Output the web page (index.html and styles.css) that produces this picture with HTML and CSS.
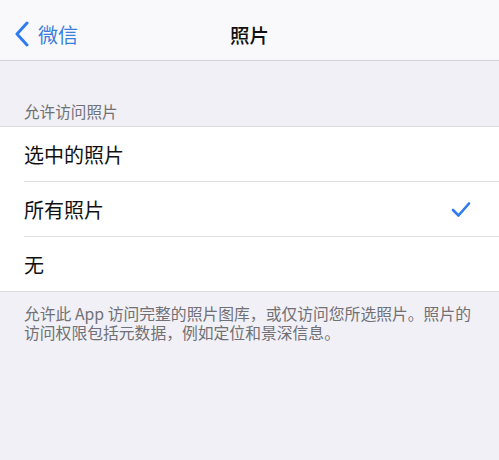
FILE: index.html
```html
<!DOCTYPE html>
<html lang="zh">
<head>
<meta charset="utf-8">
<link rel="stylesheet" href="styles.css">
</head>
<body>
<header class="nav">
  <a class="back">
    <svg class="chev" width="16" height="26" viewBox="0 0 16 26"><polyline points="13,2 3,13 13,24" fill="none" stroke="#2f7bf0" stroke-width="3" stroke-linecap="round" stroke-linejoin="round"/></svg>
    <span>微信</span>
  </a>
  <h1 class="title">照片</h1>
</header>
<div class="section-head">允许访问照片</div>
<ul class="list">
  <li class="row"><span>选中的照片</span></li>
  <li class="row"><span>所有照片</span>
    <svg class="check" width="20" height="17" viewBox="0 0 20 17"><polyline points="2,9 7.5,14.5 18,2.5" fill="none" stroke="#2f7bf0" stroke-width="2.6" stroke-linecap="round" stroke-linejoin="round"/></svg>
  </li>
  <li class="row"><span>无</span></li>
</ul>
<p class="foot">允许此 App 访问完整的照片图库，或仅访问您所选照片。照片的访问权限包括元数据，例如定位和景深信息。</p>
</body>
</html>
```
FILE: styles.css
```css
html, body {
  margin: 0;
  padding: 0;
  background: #f1f0f6;
  font-family: "Noto Sans CJK SC", "Noto Sans", sans-serif;
  height: 100%;
}
.nav {
  height: 52px;
  padding-top: 8px;
  background: #f9f9fb;
  border-bottom: 1px solid #d3d3d7;
  display: flex;
  align-items: center;
  justify-content: center;
  position: relative;
}
.back {
  position: absolute;
  left: 14px;
  top: 8px;
  height: 52px;
  display: flex;
  align-items: center;
  gap: 8px;
  color: #3a7fe0;
  font-size: 20px;
}
.title {
  margin: 0;
  font-size: 19.5px;
  font-weight: 500;
  color: #111;
}
.section-head {
  padding: 40px 24px 5px;
  line-height: 20px;
  font-size: 15.6px;
  color: #707075;
}
.list {
  list-style: none;
  margin: 0;
  padding: 0 0 0 24px;
  background: #fff;
  border-top: 1px solid #dcdce0;
  border-bottom: 1px solid #dcdce0;
}
.row {
  height: 54px;
  display: flex;
  align-items: center;
  justify-content: space-between;
  padding-right: 28px;
  font-size: 20px;
  color: #111;
  border-bottom: 1px solid #e0e0e4;
}
.row:last-child {
  border-bottom: none;
}
.check {
  display: block;
}
.foot {
  margin: 0;
  padding: 12px 18px 0 24px;
  font-size: 15.8px;
  line-height: 19px;
  color: #707075;
}
```
